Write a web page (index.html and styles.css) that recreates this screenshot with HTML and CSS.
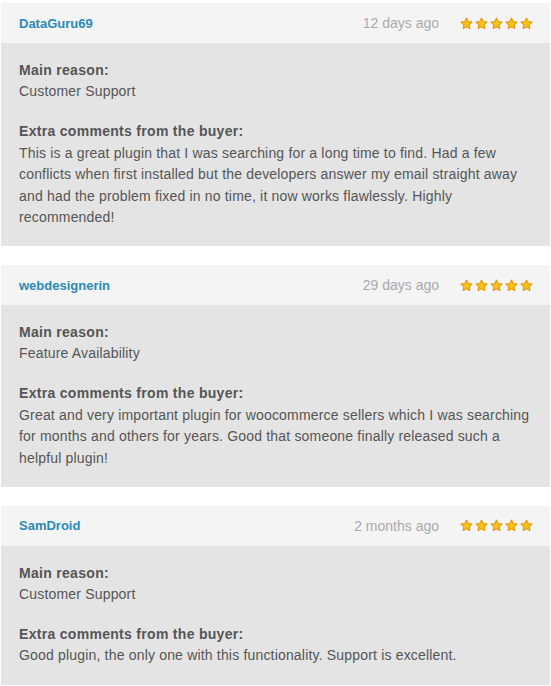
FILE: index.html
```html
<!DOCTYPE html>
<html lang="en">
<head>
<meta charset="UTF-8" />
<title>Reviews</title>
<link rel="stylesheet" href="styles.css">
</head>
<body>
<svg width="0" height="0" class="defs">
  <defs>
    <symbol id="star" viewBox="0 0 20 20">
      <path d="M10 1.5l2.6 5.4 5.9.8-4.3 4.1 1 5.9L10 14.9l-5.2 2.8 1-5.9-4.3-4.1 5.9-.8z" fill="#f8c318" stroke="#e49a10" stroke-width="1.6" stroke-linejoin="round"/>
    </symbol>
  </defs>
</svg>

<div class="review">
  <div class="review-head">
    <span class="user">DataGuru69</span>
    <span class="date">12 days ago</span>
    <span class="stars">
      <svg><use href="#star"/></svg><svg><use href="#star"/></svg><svg><use href="#star"/></svg><svg><use href="#star"/></svg><svg><use href="#star"/></svg>
    </span>
  </div>
  <div class="review-body">
    <div class="section">
      <div class="label">Main reason:</div>
      <div>Customer Support</div>
    </div>
    <div class="section">
      <div class="label">Extra comments from the buyer:</div>
      <div>This is a great plugin that I was searching for a long time to find. Had a few conflicts when first installed but the developers answer my email straight away and had the problem fixed in no time, it now works flawlessly. Highly recommended!</div>
    </div>
  </div>
</div>

<div class="review">
  <div class="review-head">
    <span class="user">webdesignerin</span>
    <span class="date">29 days ago</span>
    <span class="stars">
      <svg><use href="#star"/></svg><svg><use href="#star"/></svg><svg><use href="#star"/></svg><svg><use href="#star"/></svg><svg><use href="#star"/></svg>
    </span>
  </div>
  <div class="review-body">
    <div class="section">
      <div class="label">Main reason:</div>
      <div>Feature Availability</div>
    </div>
    <div class="section">
      <div class="label">Extra comments from the buyer:</div>
      <div>Great and very important plugin for woocommerce sellers which I was searching for months and others for years. Good that someone finally released such a helpful plugin!</div>
    </div>
  </div>
</div>

<div class="review">
  <div class="review-head">
    <span class="user">SamDroid</span>
    <span class="date">2 months ago</span>
    <span class="stars">
      <svg><use href="#star"/></svg><svg><use href="#star"/></svg><svg><use href="#star"/></svg><svg><use href="#star"/></svg><svg><use href="#star"/></svg>
    </span>
  </div>
  <div class="review-body">
    <div class="section">
      <div class="label">Main reason:</div>
      <div>Customer Support</div>
    </div>
    <div class="section">
      <div class="label">Extra comments from the buyer:</div>
      <div>Good plugin, the only one with this functionality. Support is excellent.</div>
    </div>
  </div>
</div>
</body>
</html>
```

FILE: styles.css
```css
body {
  margin: 0;
  padding: 3px 1px 0 1px;
  background: #fff;
  font-family: "Liberation Sans", Arial, sans-serif;
  font-size: 14px;
  color: #555;
}
.defs {
  position: absolute;
}
.review {
  margin-bottom: 18.6px;
}
.review-head {
  display: flex;
  align-items: center;
  height: 40px;
  padding: 0 17px 0 18px;
  background: #f4f4f4;
}
.user {
  flex: 1;
  font-size: 13px;
  font-weight: bold;
  color: #2a8ab6;
}
.date {
  font-size: 14px;
  color: #aaa;
  margin-right: 21px;
}
.stars {
  display: flex;
  gap: 2px;
}
.stars svg {
  width: 13px;
  height: 13px;
}
.review-body {
  background: #e4e4e4;
  padding: 17px 14px 18px 18px;
  line-height: 21.4px;
  letter-spacing: 0.18px;
}
.section + .section {
  margin-top: 18.6px;
}
.label {
  font-weight: bold;
  letter-spacing: 0.3px;
}
```
